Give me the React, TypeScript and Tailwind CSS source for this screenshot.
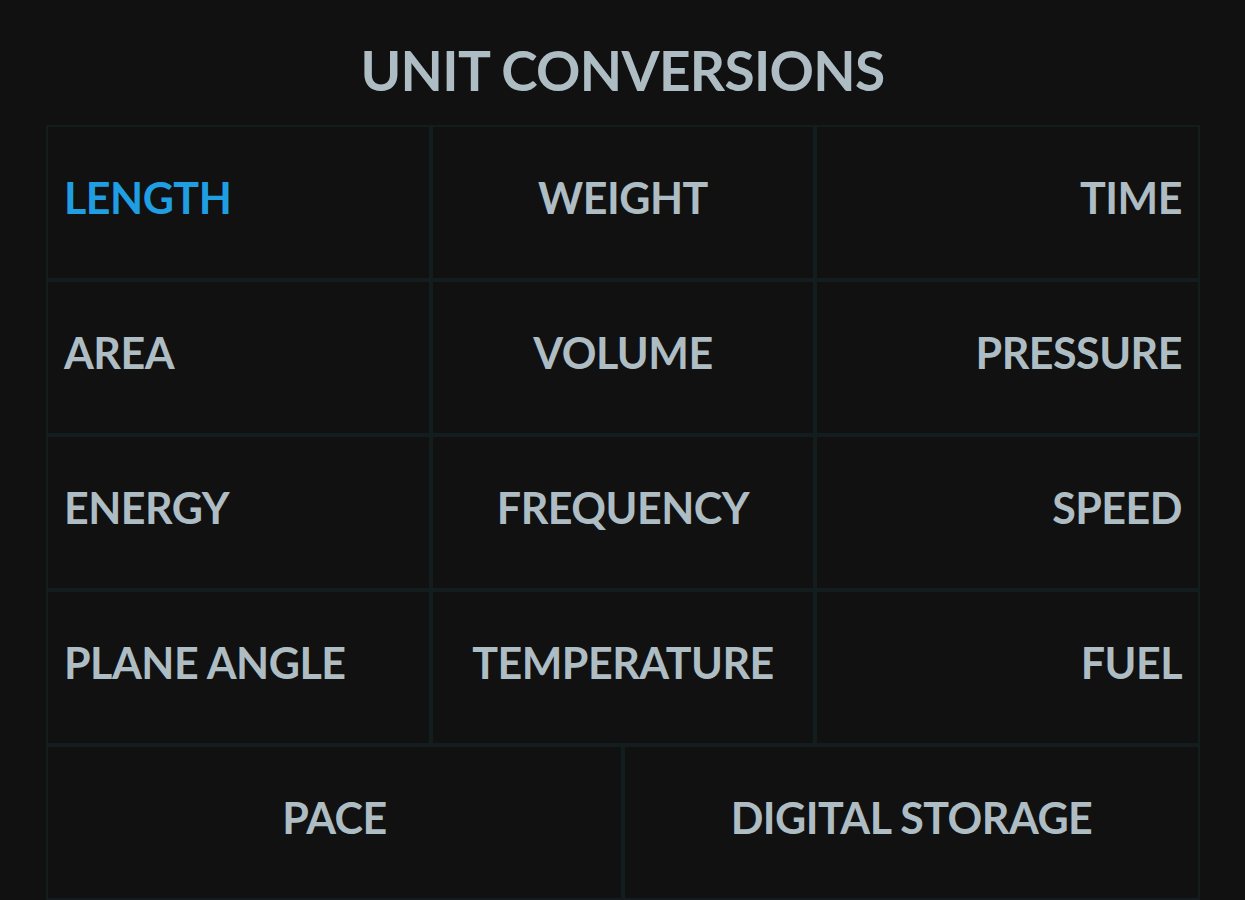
import React from 'react';

const rows: { label: string; align: string }[][] = [
  [
    { label: 'LENGTH', align: 'justify-start' },
    { label: 'WEIGHT', align: 'justify-center' },
    { label: 'TIME', align: 'justify-end' },
  ],
  [
    { label: 'AREA', align: 'justify-start' },
    { label: 'VOLUME', align: 'justify-center' },
    { label: 'PRESSURE', align: 'justify-end' },
  ],
  [
    { label: 'ENERGY', align: 'justify-start' },
    { label: 'FREQUENCY', align: 'justify-center' },
    { label: 'SPEED', align: 'justify-end' },
  ],
  [
    { label: 'PLANE ANGLE', align: 'justify-start' },
    { label: 'TEMPERATURE', align: 'justify-center' },
    { label: 'FUEL', align: 'justify-end' },
  ],
];

const Cell = ({ label, align, active }: { label: string; align: string; active?: boolean }) => (
  <div
    className={`flex items-center ${align} px-[16px] pb-[8px] h-[155px] border-2 border-[#141d1d] bg-[#111111] text-[43px] font-bold tracking-[-0.5px] ${
      active ? 'text-[#1f9fe2]' : 'text-[#aebdc3]'
    }`}
  >
    {label}
  </div>
);

const App = () => {
  return (
    <div className="min-h-[900px] w-full bg-[#111111] font-['Lato',sans-serif] overflow-hidden">
      {/* Title */}
      <h1 className="h-[125px] flex items-center justify-center pt-[16px] text-[55px] font-bold text-[#aebdc3] tracking-[-0.7px]">
        UNIT CONVERSIONS
      </h1>

      <div className="mx-[46px] w-[1154px]">
        <div className="grid grid-cols-3">
          {rows.flat().map((c, i) => (
            <Cell key={c.label} label={c.label} align={c.align} active={i === 0} />
          ))}
        </div>
        <div className="grid grid-cols-2">
          <Cell label="PACE" align="justify-center" />
          <Cell label="DIGITAL STORAGE" align="justify-center" />
        </div>
      </div>
    </div>
  );
};

export default App;
